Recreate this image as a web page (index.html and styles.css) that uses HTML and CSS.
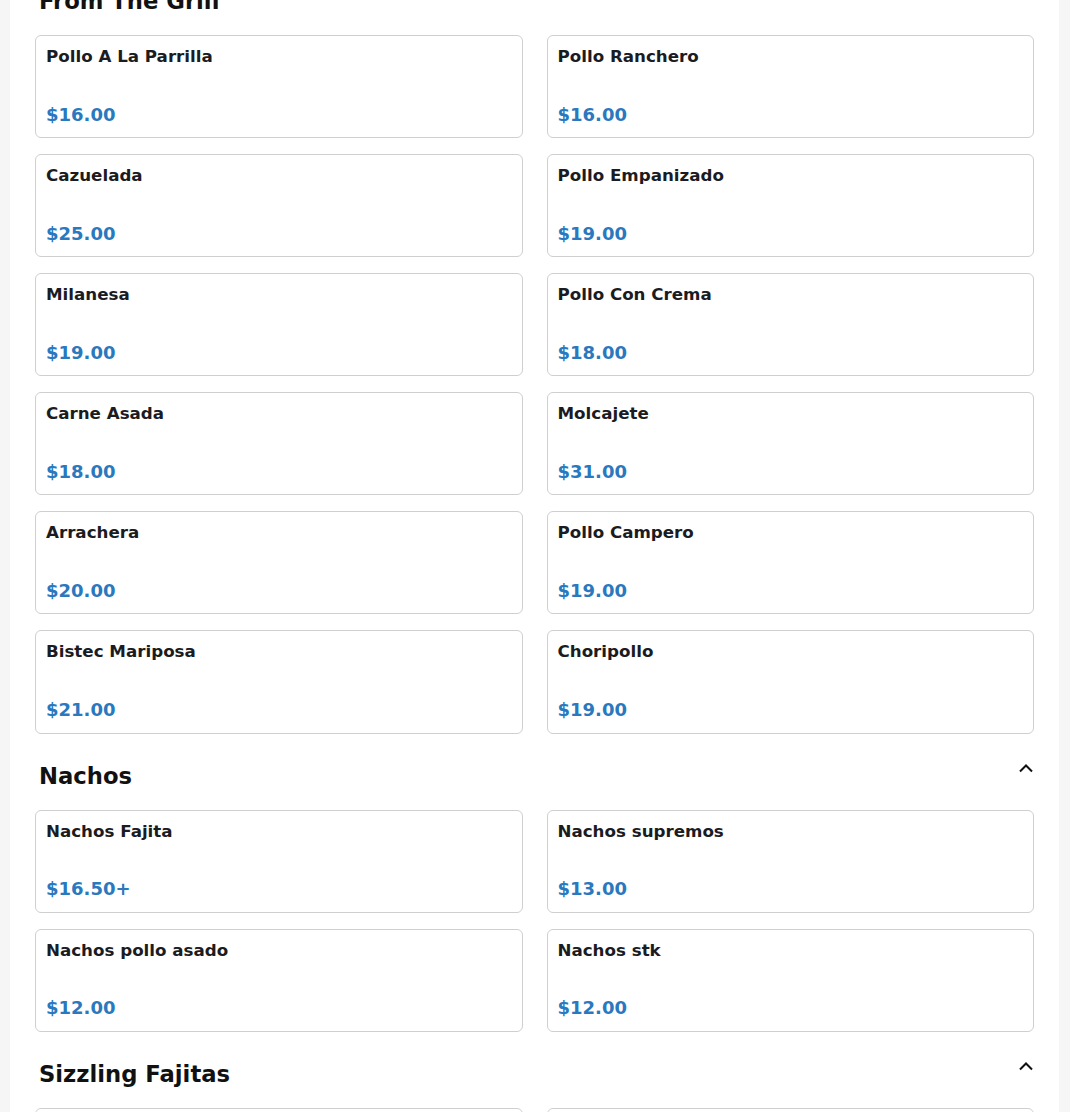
FILE: index.html
```html
<!DOCTYPE html>
<html lang="en">
<head>
<meta charset="utf-8">
<title>Menu</title>
<link rel="stylesheet" href="styles.css">
</head>
<body>
<main class="menu">
  <section class="section">
    <div class="section-header">
      <h2 class="section-title">From The Grill</h2>
      <svg class="chevron" width="16" height="16" viewBox="0 0 16 16"><path d="M2 10.5 L8 4.5 L14 10.5" fill="none" stroke="#111" stroke-width="2"/></svg>
    </div>
    <div class="grid">
      <div class="card"><h3 class="item-name">Pollo A La Parrilla</h3><p class="price">$16.00</p></div>
      <div class="card"><h3 class="item-name">Pollo Ranchero</h3><p class="price">$16.00</p></div>
      <div class="card"><h3 class="item-name">Cazuelada</h3><p class="price">$25.00</p></div>
      <div class="card"><h3 class="item-name">Pollo Empanizado</h3><p class="price">$19.00</p></div>
      <div class="card"><h3 class="item-name">Milanesa</h3><p class="price">$19.00</p></div>
      <div class="card"><h3 class="item-name">Pollo Con Crema</h3><p class="price">$18.00</p></div>
      <div class="card"><h3 class="item-name">Carne Asada</h3><p class="price">$18.00</p></div>
      <div class="card"><h3 class="item-name">Molcajete</h3><p class="price">$31.00</p></div>
      <div class="card"><h3 class="item-name">Arrachera</h3><p class="price">$20.00</p></div>
      <div class="card"><h3 class="item-name">Pollo Campero</h3><p class="price">$19.00</p></div>
      <div class="card"><h3 class="item-name">Bistec Mariposa</h3><p class="price">$21.00</p></div>
      <div class="card"><h3 class="item-name">Choripollo</h3><p class="price">$19.00</p></div>
    </div>
  </section>
  <section class="section">
    <div class="section-header">
      <h2 class="section-title">Nachos</h2>
      <svg class="chevron" width="16" height="16" viewBox="0 0 16 16"><path d="M2 10.5 L8 4.5 L14 10.5" fill="none" stroke="#111" stroke-width="2"/></svg>
    </div>
    <div class="grid">
      <div class="card"><h3 class="item-name">Nachos Fajita</h3><p class="price">$16.50+</p></div>
      <div class="card"><h3 class="item-name">Nachos supremos</h3><p class="price">$13.00</p></div>
      <div class="card"><h3 class="item-name">Nachos pollo asado</h3><p class="price">$12.00</p></div>
      <div class="card"><h3 class="item-name">Nachos stk</h3><p class="price">$12.00</p></div>
    </div>
  </section>
  <section class="section">
    <div class="section-header">
      <h2 class="section-title">Sizzling Fajitas</h2>
      <svg class="chevron" width="16" height="16" viewBox="0 0 16 16"><path d="M2 10.5 L8 4.5 L14 10.5" fill="none" stroke="#111" stroke-width="2"/></svg>
    </div>
    <div class="grid">
      <div class="card"><h3 class="item-name">Fajitas de Pollo</h3><p class="price">$18.00</p></div>
      <div class="card"><h3 class="item-name">Fajitas de Res</h3><p class="price">$19.00</p></div>
    </div>
  </section>
</main>
</body>
</html>
```

FILE: styles.css
```css
html, body {
  margin: 0;
  padding: 0;
  background: #f6f6f6;
  font-family: "DejaVu Sans", "Liberation Sans", sans-serif;
}

body {
  overflow: hidden;
  height: 1112px;
}

.menu {
  width: 999px;
  margin: -25px 0 0 10px;
  padding: 0 25px 40px;
  background: #ffffff;
  min-height: 1200px;
}

.section {
  margin-bottom: 16px;
}

.section-header {
  display: flex;
  justify-content: space-between;
  align-items: flex-start;
  padding: 13px 0 5px 4px;
  margin-bottom: 16px;
}

.section-title {
  margin: 0;
  font-size: 22.7px;
  font-weight: bold;
  line-height: normal;
  color: #111111;
}

.chevron {
  display: block;
  margin-top: -2px;
}

.grid {
  display: grid;
  grid-template-columns: 1fr 1fr;
  column-gap: 24px;
  row-gap: 16px;
}

.card {
  border: 1px solid #cfcfcf;
  border-radius: 6px;
  padding: 10px 10px 12.5px;
  height: 103.1px;
  box-sizing: border-box;
  display: flex;
  flex-direction: column;
  justify-content: space-between;
}

.item-name {
  margin: 0;
  font-size: 16.7px;
  font-weight: bold;
  line-height: normal;
  color: #1b1b22;
}

.price {
  margin: 0;
  font-size: 18px;
  font-weight: bold;
  line-height: normal;
  color: #2a78be;
}
```
